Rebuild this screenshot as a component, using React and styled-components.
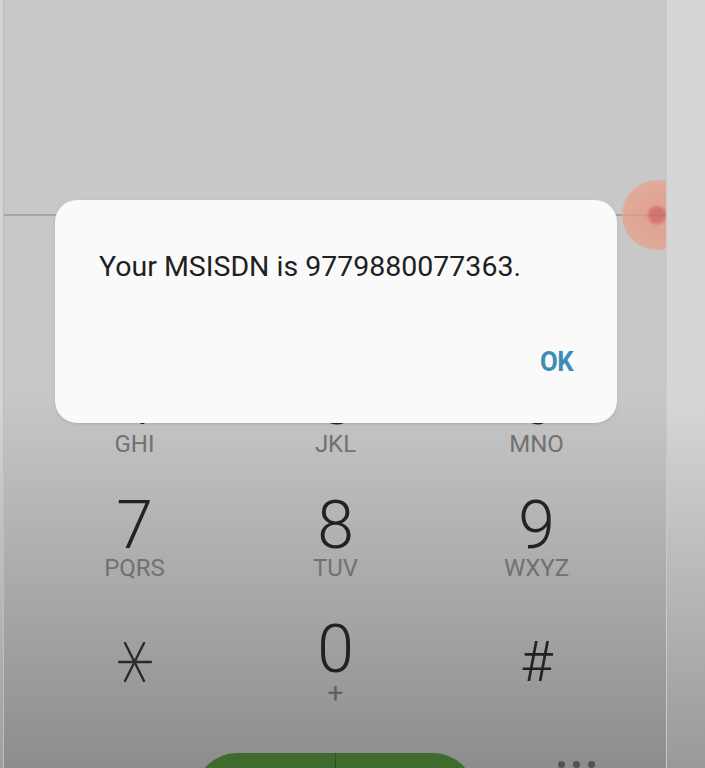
import styled, { createGlobalStyle } from "styled-components";

const GlobalStyle = createGlobalStyle`
    html, body {
        margin: 0;
        padding: 0;
        background: #c8c8c8;
    }
    body {
        font-family: Roboto, "Liberation Sans", sans-serif;
        overflow: hidden;
    }
`;

const Frame = styled.div`
    display: flex;
    width: 705px;
    height: 768px;
    overflow: hidden;
`;

const LeftBezel = styled.div`
    width: 3px;
    flex-shrink: 0;
    border-right: 1px solid #bdbdbd;
    background: linear-gradient(to bottom, #d4d4d4 0, #d4d4d4 400px, #9e9e9e 768px);
`;

const RightBezel = styled.div`
    width: 38px;
    flex-shrink: 0;
    border-left: 1px solid #c9c9c9;
    background: linear-gradient(to bottom, #d6d6d6 0, #d6d6d6 400px, #999999 768px);
`;

const Screen = styled.div`
    position: relative;
    flex: 1;
    display: flex;
    flex-direction: column;
    overflow: hidden;
    background: linear-gradient(to bottom, #c8c8c8 0, #c8c8c8 390px, #8d8d8d 768px);
`;

const NumberDisplay = styled.div`
    height: 214px;
    flex-shrink: 0;
    border-bottom: 2px solid #a5a5a5;
`;

const Keypad = styled.div`
    display: grid;
    grid-template-columns: repeat(3, 201px);
    grid-auto-rows: 124px;
    padding: 32px 0 0 30px;
`;

const Key = styled.div`
    display: flex;
    flex-direction: column;
    align-items: center;
    visibility: ${(p) => p.$covered ? "hidden" : "visible"};
`;

const Digit = styled.span`
    display: block;
    height: 60px;
    font-size: 66px;
    line-height: 60px;
    font-weight: 300;
    color: #222;
`;

const Hash = styled.span`
    display: block;
    box-sizing: border-box;
    height: 60px;
    padding-top: 24px;
    font-size: 56px;
    line-height: 36px;
    font-weight: 300;
    color: #222;
`;

const Letters = styled.span`
    display: block;
    height: 24px;
    font-size: 24px;
    line-height: 24px;
    color: #717171;
`;

const Plus = styled.span`
    display: block;
    margin-top: 2px;
    font-size: 28px;
    line-height: 22px;
    color: #5f5f5f;
`;

const StarIcon = styled.svg`
    display: block;
    margin-top: 22px;
`;

const CallRow = styled.div`
    display: grid;
    grid-template-columns: 1fr 280px 1fr;
    margin-top: 9px;
`;

const CallButton = styled.div`
    grid-column: 2;
    display: flex;
    height: 80px;
    border-radius: 42px 42px 0 0;
    overflow: hidden;
    background: #3f6b2e;
`;

const CallHalf = styled.div`
    flex: 1;
    border-right: ${(p) => p.$divider ? "1px solid #2c5020" : "none"};
`;

const MoreDots = styled.div`
    display: flex;
    gap: 8px;
    padding: 8px 0 0 83px;

    span {
        width: 7px;
        height: 7px;
        border-radius: 50%;
        background: #545454;
    }
`;

const Ripple = styled.div`
    position: absolute;
    left: 618px;
    top: 180px;
    width: 70px;
    height: 70px;
    border-radius: 50%;
    background: radial-gradient(circle, rgba(214, 100, 92, 0.85) 0, rgba(214, 100, 92, 0.8) 7px, rgba(232, 150, 128, 0.75) 11px, rgba(234, 160, 138, 0.7) 70%, rgba(234, 160, 138, 0.45) 100%);
`;

const Dialog = styled.div`
    position: absolute;
    left: 51px;
    top: 200px;
    width: 562px;
    height: 223px;
    box-sizing: border-box;
    padding: 50px 44px 47px 44px;
    display: flex;
    flex-direction: column;
    justify-content: space-between;
    background: #fafafa;
    border-radius: 22px;
    box-shadow: 0 1px 3px rgba(0, 0, 0, 0.12);
`;

const Message = styled.p`
    margin: 0;
    font-size: 28.5px;
    line-height: 34px;
    color: #1f1f1f;
`;

const Actions = styled.div`
    display: flex;
    justify-content: flex-end;
`;

const OkButton = styled.button`
    border: none;
    background: none;
    padding: 0;
    font-family: Roboto, "Liberation Sans", sans-serif;
    font-size: 28px;
    line-height: 28px;
    font-weight: 700;
    letter-spacing: -0.5px;
    color: #3b8db5;
    transform: scaleX(0.92);
    transform-origin: right center;
`;

// first row sits fully under the dialog
const keys = [
    { d: "1", l: "", covered: true },
    { d: "2", l: "ABC", covered: true },
    { d: "3", l: "DEF", covered: true },
    { d: "4", l: "GHI" },
    { d: "5", l: "JKL" },
    { d: "6", l: "MNO" },
    { d: "7", l: "PQRS" },
    { d: "8", l: "TUV" },
    { d: "9", l: "WXYZ" },
];

const Star = () => (
    <StarIcon width="34" height="40" viewBox="0 0 34 40" fill="none" stroke="#2a2a2a" strokeWidth="2.4" strokeLinecap="round">
        <line x1="1" y1="20" x2="33" y2="20" />
        <line x1="7" y1="1" x2="26" y2="39" />
        <line x1="26" y1="1" x2="7" y2="39" />
    </StarIcon>
);

const App = () => {
    return (
        <>
            <GlobalStyle />
            <Frame>
                <LeftBezel />
                <Screen>
                    <NumberDisplay />
                    <Keypad>
                        {keys.map((k) => (
                            <Key key={k.d} $covered={k.covered}>
                                <Digit>{k.d}</Digit>
                                <Letters>{k.l}</Letters>
                            </Key>
                        ))}
                        <Key>
                            <Star />
                        </Key>
                        <Key>
                            <Digit>0</Digit>
                            <Plus>+</Plus>
                        </Key>
                        <Key>
                            <Hash>#</Hash>
                        </Key>
                    </Keypad>
                    <CallRow>
                        <CallButton>
                            <CallHalf $divider />
                            <CallHalf />
                        </CallButton>
                        <MoreDots>
                            <span />
                            <span />
                            <span />
                        </MoreDots>
                    </CallRow>
                    <Ripple />
                    <Dialog>
                        <Message>Your MSISDN is 9779880077363.</Message>
                        <Actions>
                            <OkButton>OK</OkButton>
                        </Actions>
                    </Dialog>
                </Screen>
                <RightBezel />
            </Frame>
        </>
    );
};

export default App;
